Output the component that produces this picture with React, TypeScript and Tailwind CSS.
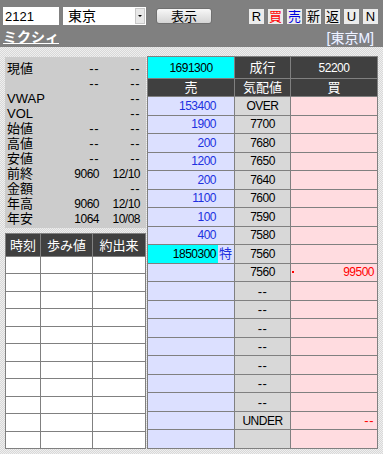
import React from 'react';

const font = { fontFamily: '"Liberation Sans", "Noto Sans CJK JP", sans-serif' };

const info: [string, string, string][] = [
  ['現値', '--', '--'],
  ['', '--', '--'],
  ['VWAP', '', '--'],
  ['VOL', '', '--'],
  ['始値', '--', '--'],
  ['高値', '--', '--'],
  ['安値', '--', '--'],
  ['前終', '9060', '12/10'],
  ['金額', '', '--'],
  ['年高', '9060', '12/10'],
  ['年安', '1064', '10/08'],
];

type Row = { sell: string; price: string; buy: string; special?: boolean; dot?: boolean };

const rows: Row[] = [
  { sell: '153400', price: 'OVER', buy: '' },
  { sell: '1900', price: '7700', buy: '' },
  { sell: '200', price: '7680', buy: '' },
  { sell: '1200', price: '7650', buy: '' },
  { sell: '200', price: '7640', buy: '' },
  { sell: '1100', price: '7600', buy: '' },
  { sell: '100', price: '7590', buy: '' },
  { sell: '400', price: '7580', buy: '' },
  { sell: '1850300', price: '7560', buy: '', special: true },
  { sell: '', price: '7560', buy: '99500', dot: true },
  { sell: '', price: '--', buy: '' },
  { sell: '', price: '--', buy: '' },
  { sell: '', price: '--', buy: '' },
  { sell: '', price: '--', buy: '' },
  { sell: '', price: '--', buy: '' },
  { sell: '', price: '--', buy: '' },
  { sell: '', price: '--', buy: '' },
  { sell: '', price: 'UNDER', buy: '--' },
  { sell: '', price: '', buy: '' },
];

const tabs = [
  { t: 'R', c: 'text-black' },
  { t: '買', c: 'text-[#ff0000]' },
  { t: '売', c: 'text-[#0000e0]' },
  { t: '新', c: 'text-black' },
  { t: '返', c: 'text-black' },
  { t: 'U', c: 'text-black' },
  { t: 'N', c: 'text-black' },
];

// dashes get spaced out a bit, digits squeezed a little
function Val({ v }: { v: string }) {
  if (v === '--') return <span className="text-[13px] tracking-[0.5px]">--</span>;
  return <span className="tracking-[-0.5px]">{v}</span>;
}

export default function App() {
  return (
    <div
      style={font}
      className="w-[383px] h-[454px] overflow-hidden text-[12px] leading-none text-black bg-[repeating-conic-gradient(#d8d8d8_0%_25%,#efefef_0%_50%)] bg-[length:2px_2px]"
    >
      {/* header */}
      <div className="h-[47px] bg-[#808080] px-[3px] pt-[7px]">
        <div className="flex items-center h-[18px]">
          <div className="w-[56px] h-[18px] bg-white flex items-center pl-[2px] text-[13px]">2121</div>
          <div className="ml-[4px] w-[83px] h-[18px] bg-white flex items-center justify-between">
            <span className="pl-[5px] text-[14px]">東京</span>
            <span className="w-[10px] h-[16px] mr-[1px] bg-[#e8e8e8] border border-[#c8c8c8] flex items-center justify-center">
              <span className="block w-0 h-0 border-l-[2px] border-r-[2px] border-t-[2px] border-l-transparent border-r-transparent border-t-black" />
            </span>
          </div>
          <button className="ml-[10px] w-[56px] h-[16px] rounded-[3px] border border-[#707070] bg-gradient-to-b from-[#f8f8f8] to-[#d4d4d4] text-[13px] flex items-center justify-center">
            表示
          </button>
          <div className="ml-auto flex gap-[4px] mr-[2px]">
            {tabs.map((b) => (
              <span
                key={b.t}
                className={`w-[15px] h-[15px] bg-[#ececec] flex items-center justify-center text-[13px] ${b.c}`}
              >
                {b.t}
              </span>
            ))}
          </div>
        </div>
        <div className="flex items-center justify-between mt-[4px]">
          <span className="text-white font-bold underline text-[14px]">ミクシィ</span>
          <span className="text-[#f0f4ff] text-[14px] mr-[6px] mt-[2px] [text-shadow:0_0_1px_#8090c0]">[東京M]</span>
        </div>
      </div>

      <div className="flex pt-[9px]">
        {/* left column */}
        <div className="ml-[5px] w-[141px] flex flex-col">
          <div className="mt-[1px] h-[171px] bg-[#cccccc] pt-[4px] pl-[2px]">
            {info.map(([l, a, b], i) => (
              <div key={i} className="grid grid-cols-[50px_42px_41px] h-[15px] items-center">
                <span className="text-[13px]">{l}</span>
                <span className="text-right">{a && <Val v={a} />}</span>
                <span className="text-right">{b && <Val v={b} />}</span>
              </div>
            ))}
          </div>
          <div className="mt-[5px] h-[216px] grid grid-cols-[34px_51px_52px] grid-rows-[22px_repeat(11,1fr)] gap-px p-px bg-[#808080]">
            {['時刻', '歩み値', '約出来'].map((h) => (
              <div key={h} className="bg-[#404040] text-white text-[13px] flex items-center justify-center">
                {h}
              </div>
            ))}
            {Array.from({ length: 33 }).map((_, i) => (
              <div key={i} className="bg-white" />
            ))}
          </div>
        </div>

        {/* board */}
        <div className="ml-[1px] w-[231px] h-[393px] grid grid-cols-[86px_55px_86px] grid-rows-[21px_17px_repeat(19,1fr)] gap-px p-px bg-[#808080]">
          <div className="bg-[#00ffff] flex items-center justify-center"><Val v="1691300" /></div>
          <div className="bg-[#404040] text-white text-[13px] flex items-center justify-center">成行</div>
          <div className="bg-[#404040] text-white flex items-center justify-center"><Val v="52200" /></div>
          <div className="bg-[#404040] text-white text-[13px] flex items-center justify-center">売</div>
          <div className="bg-[#404040] text-white text-[13px] flex items-center justify-center">気配値</div>
          <div className="bg-[#404040] text-white text-[13px] flex items-center justify-center">買</div>
          {rows.map((r, i) => (
            <React.Fragment key={i}>
              {r.special ? (
                <div className="bg-[#dce0ff] flex items-stretch">
                  <span className="w-[70px] bg-[#00ffff] flex items-center justify-end pr-[2px] text-black"><Val v={r.sell} /></span>
                  <span className="flex items-center pl-[1px] text-[13px] text-[#2030e0]">特</span>
                </div>
              ) : (
                <div className="bg-[#dce0ff] flex items-center justify-end pr-[18px] text-[#2030e0]">{r.sell && <Val v={r.sell} />}</div>
              )}
              <div className="bg-[#d8d8d8] flex items-center justify-center">{r.price && <Val v={r.price} />}</div>
              <div className="bg-[#ffdce0] flex items-center justify-end pr-[3px] text-[#ff0000] relative">
                {r.dot && <span className="absolute left-[1px] top-1/2 -translate-y-1/2 w-[2px] h-[2px] bg-[#ff0000]" />}
                {r.buy && <Val v={r.buy} />}
              </div>
            </React.Fragment>
          ))}
        </div>
      </div>
    </div>
  );
}
